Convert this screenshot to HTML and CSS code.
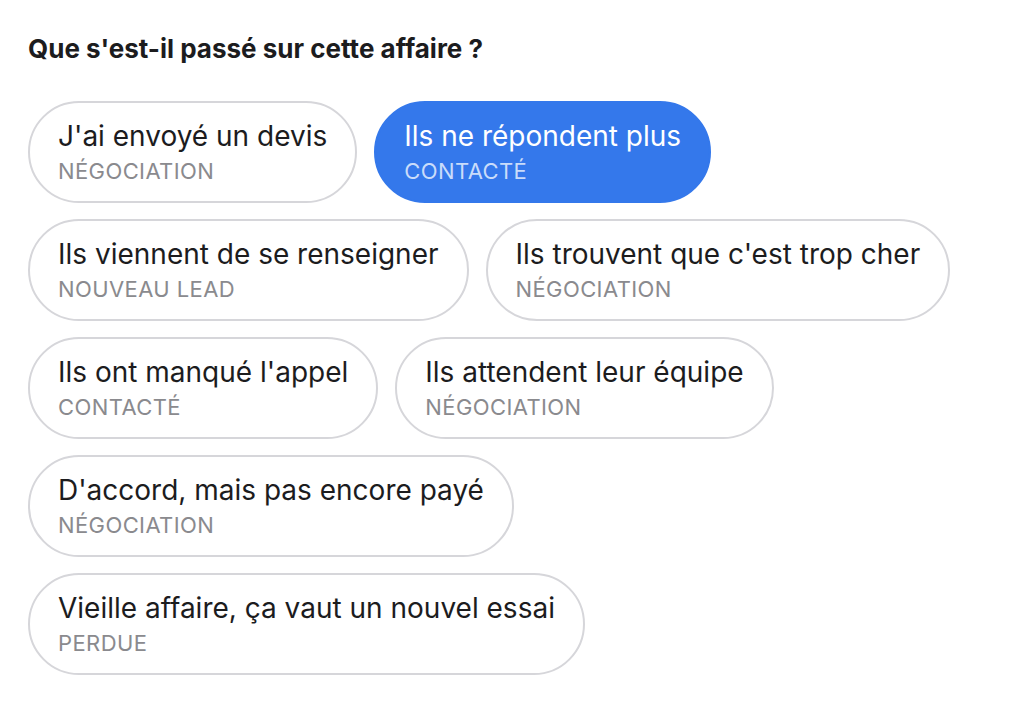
FILE: index.html
```html
<!DOCTYPE html>
<html lang="fr">
  <head>
    <meta charset="UTF-8" />
    <meta name="viewport" content="width=device-width, initial-scale=1.0" />
    <title>Que s'est-il passé ?</title>
    <link rel="stylesheet" href="styles.css">
  </head>
  <body>
    <div class="panel">
      <h2 class="question">Que s'est-il passé sur cette affaire ?</h2>

      <div class="choices">
        <button class="choice">
          <span class="choice-label">J'ai envoyé un devis</span>
          <span class="choice-stage">Négociation</span>
        </button>
        <button class="choice selected">
          <span class="choice-label">Ils ne répondent plus</span>
          <span class="choice-stage">Contacté</span>
        </button>
        <button class="choice">
          <span class="choice-label">Ils viennent de se renseigner</span>
          <span class="choice-stage">Nouveau lead</span>
        </button>
        <button class="choice">
          <span class="choice-label">Ils trouvent que c'est trop cher</span>
          <span class="choice-stage">Négociation</span>
        </button>
        <button class="choice">
          <span class="choice-label">Ils ont manqué l'appel</span>
          <span class="choice-stage">Contacté</span>
        </button>
        <button class="choice">
          <span class="choice-label">Ils attendent leur équipe</span>
          <span class="choice-stage">Négociation</span>
        </button>
        <button class="choice">
          <span class="choice-label">D'accord, mais pas encore payé</span>
          <span class="choice-stage">Négociation</span>
        </button>
        <button class="choice">
          <span class="choice-label">Vieille affaire, ça vaut un nouvel essai</span>
          <span class="choice-stage">Perdue</span>
        </button>
      </div>
    </div>
  </body>
</html>
```

FILE: styles.css
```css
body {
  font-family: Inter, "Noto Sans", sans-serif;
  margin: 0;
  padding: 0;
  background-color: white;
  color: #1c1c1e;
}
.panel {
  padding: 33px 28px;
  max-width: 980px;
}
.question {
  font-size: 26px;
  font-weight: 700;
  margin: 0 0 36px 0;
  line-height: 32px;
}
.choices {
  display: flex;
  flex-wrap: wrap;
  gap: 16px 17px;
}
.choice {
  display: flex;
  flex-direction: column;
  align-items: flex-start;
  padding: 14px 28px;
  border: 2px solid #d6d6da;
  border-radius: 60px;
  background-color: white;
  font-family: inherit;
  cursor: pointer;
  text-align: left;
}
.choice-label {
  font-size: 28px;
  line-height: 38px;
  color: #1c1c1e;
}
.choice-stage {
  font-size: 22px;
  line-height: 32px;
  letter-spacing: 0.4px;
  text-transform: uppercase;
  color: #8a8a8e;
}
.choice.selected {
  background-color: #3478eb;
  border-color: #3478eb;
}
.choice.selected .choice-label {
  color: white;
}
.choice.selected .choice-stage {
  color: #c9dcfa;
}
```
